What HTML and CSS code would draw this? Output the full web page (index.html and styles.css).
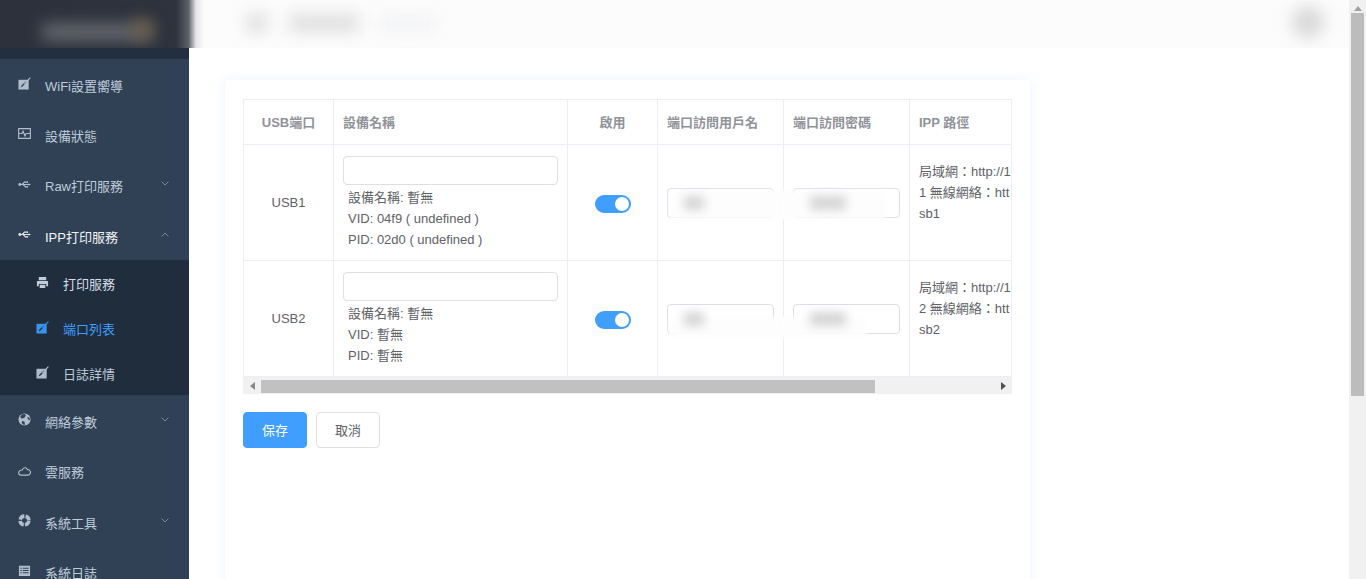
FILE: index.html
```html
<!DOCTYPE html>
<html lang="zh-Hant">
<head>
<meta charset="utf-8">
<title>端口列表</title>
<link rel="stylesheet" href="styles.css">
</head>
<body>
<div class="app">
  <aside class="sidebar">
    <div class="logo"><div class="logo-blur"></div><div class="logo-glow"></div></div>
    <div class="strip"></div>
    <nav class="menu">
      <a class="item"><svg class="ico" viewBox="0 0 14 14"><rect x=".5" y="3" width="11" height="10.500"/><path class="cut" d="M3.500 10.500 9 5"/><path class="line" d="M7 7.500 13.300.8"/></svg><span>WiFi設置嚮導</span></a>
      <a class="item"><svg class="ico" viewBox="0 0 14 14"><path class="line" d="M.7 1.700h12.600v10.600H.7zM.7 7h3.500l1.200-2.500L7.500 9.500l1.300-2.500h4.500"/></svg><span>設備狀態</span></a>
      <a class="item"><svg class="ico" viewBox="0 0 14 14"><path class="line" d="M2 7h10M4.500 7l2.500-2.500h2M5.500 7l2.500 2.500h1.500"/><circle cx="2" cy="7" r="1.600"/><path d="M13.800 7 11.500 5.600v2.800z"/><rect x="9" y="3.600" width="1.800" height="1.800"/><circle cx="10" cy="9.500" r="1"/></svg><span>Raw打印服務</span><svg class="chev" viewBox="0 0 8 5"><path d="M.5.500 4 4 7.500.500"/></svg></a>
      <a class="item open"><svg class="ico" viewBox="0 0 14 14"><path class="line" d="M2 7h10M4.500 7l2.500-2.500h2M5.500 7l2.500 2.500h1.500"/><circle cx="2" cy="7" r="1.600"/><path d="M13.800 7 11.500 5.600v2.800z"/><rect x="9" y="3.600" width="1.800" height="1.800"/><circle cx="10" cy="9.500" r="1"/></svg><span>IPP打印服務</span><svg class="chev" viewBox="0 0 8 5"><path d="M.5 4.500 4 1l3.500 3.500"/></svg></a>
      <div class="submenu">
        <a class="subitem white"><svg class="ico" viewBox="0 0 14 14"><path d="M3 1h8v3.500H3zM1 5.500h12V11h-2V8.500H3V11H1zM4 9.500h6V13H4z"/></svg><span>打印服務</span></a>
        <a class="subitem active"><svg class="ico" viewBox="0 0 14 14"><rect x=".5" y="3" width="11" height="10.500"/><path class="cut" d="M3.500 10.500 9 5"/><path class="line" d="M7 7.500 13.300.8"/></svg><span>端口列表</span></a>
        <a class="subitem"><svg class="ico" viewBox="0 0 14 14"><rect x=".5" y="3" width="11" height="10.500"/><path class="cut" d="M3.500 10.500 9 5"/><path class="line" d="M7 7.500 13.300.8"/></svg><span>日誌詳情</span></a>
      </div>
      <a class="item"><svg class="ico" viewBox="0 0 14 14"><circle cx="7" cy="7" r="6.500"/><path class="patch" d="M4 1.500 7.500 1l1 2-2 2.500L3.500 6 2.500 4zM4.500 8.500l2.500 1 .5 3.500-2-.5-1.500-2zM10 4l2.500 1.500.5 2.500-2.500-1.500z"/></svg><span>網絡參數</span><svg class="chev" viewBox="0 0 8 5"><path d="M.5.500 4 4 7.500.500"/></svg></a>
      <a class="item"><svg class="ico" viewBox="0 0 14 14"><path class="line" d="M3.500 12h7a3 3 0 0 0 2.500-4.500 3 3 0 0 0-2.800-1.500C9.500 3.500 5.500 3 4.500 6.500 2 6.500.7 8 .7 9.500S2 12 3.500 12z"/></svg><span>雲服務</span></a>
      <a class="item"><svg class="ico" viewBox="0 0 14 14"><circle class="buoy" cx="7" cy="7" r="4.700"/></svg><span>系統工具</span><svg class="chev" viewBox="0 0 8 5"><path d="M.5.500 4 4 7.500.500"/></svg></a>
      <a class="item"><svg class="ico" viewBox="0 0 14 14"><path d="M1 2h12v11H1zM2.500 4v1h1.500V4zM5 4v1h6.500V4zM2.500 6.500v1h1.500v-1zM5 6.500v1h6.500v-1zM2.500 9v1h1.500V9zM5 9v1h6.500V9z" fill-rule="evenodd"/></svg><span>系統日誌</span></a>
    </nav>
  </aside>

  <main class="main">
    <header class="topbar">
      <div class="blob crumb-a"></div>
      <div class="blob crumb-b"></div>
      <div class="blob crumb-c"></div>
      <div class="blob avatar"></div>
    </header>
    <div class="content">
      <section class="card">
        <div class="table-wrap">
          <table class="ports">
            <colgroup>
              <col class="c-usb"><col class="c-name"><col class="c-on"><col class="c-cred"><col class="c-cred"><col class="c-path">
            </colgroup>
            <thead>
              <tr>
                <th class="center">USB端口</th>
                <th>設備名稱</th>
                <th class="center">啟用</th>
                <th>端口訪問用戶名</th>
                <th>端口訪問密碼</th>
                <th>IPP 路徑</th>
              </tr>
            </thead>
            <tbody>
              <tr>
                <td class="center">USB1</td>
                <td>
                  <div class="text-input"></div>
                  <div class="info">設備名稱: 暫無</div>
                  <div class="info">VID: 04f9 ( undefined )</div>
                  <div class="info">PID: 02d0 ( undefined )</div>
                </td>
                <td class="center"><span class="switch"><i></i></span></td>
                <td><div class="cred"><div class="veil"></div><div class="smear short"></div></div></td>
                <td><div class="cred"><div class="veil tail-a"></div><div class="smear long"></div></div></td>
                <td class="path">
                  <div>局域網：http://1</div>
                  <div>1 無線網絡：htt</div>
                  <div>sb1</div>
                </td>
              </tr>
              <tr>
                <td class="center">USB2</td>
                <td>
                  <div class="text-input"></div>
                  <div class="info">設備名稱: 暫無</div>
                  <div class="info">VID: 暫無</div>
                  <div class="info">PID: 暫無</div>
                </td>
                <td class="center"><span class="switch"><i></i></span></td>
                <td><div class="cred"><div class="veil low"></div><div class="smear short"></div></div></td>
                <td><div class="cred"><div class="veil low tail-b"></div><div class="smear long"></div></div></td>
                <td class="path">
                  <div>局域網：http://1</div>
                  <div>2 無線網絡：htt</div>
                  <div>sb2</div>
                </td>
              </tr>
            </tbody>
          </table>
        </div>
        <div class="hscroll">
          <span class="arrow-left"></span>
          <div class="hthumb"></div>
          <span class="arrow-right"></span>
        </div>
        <div class="actions">
          <button class="btn primary">保存</button>
          <button class="btn">取消</button>
        </div>
      </section>
    </div>
  </main>

  <div class="vscroll">
    <span class="arrow-up"></span>
    <div class="vthumb"></div>
  </div>
</div>
</body>
</html>
```
FILE: styles.css
```css
* { box-sizing: border-box; }
html, body { margin: 0; height: 100%; overflow: hidden; background: #fff; }
body {
  font-family: "Liberation Sans", "Noto Sans CJK TC", sans-serif;
  font-size: 13px;
  color: #606266;
}
.app { display: flex; height: 579px; overflow: hidden; }

/* sidebar */
.sidebar { width: 189px; flex: none; background: #304156; display: flex; flex-direction: column; overflow: hidden; }
.logo {
  height: 48px; flex: none; position: relative; overflow: hidden;
  background: linear-gradient(90deg, #2c313c 0, #2f333e 176px, #5d616b 189px);
}
.logo-blur { position: absolute; left: 42px; top: 24px; width: 108px; height: 16px; background: #6a6c72; filter: blur(8px); }
.logo-glow { position: absolute; left: 134px; top: 20px; width: 18px; height: 18px; background: #6f5f48; filter: blur(8px); }
.strip { height: 11px; flex: none; background: #232e3e; }
.menu { display: flex; flex-direction: column; }
.item, .subitem { display: flex; align-items: center; color: #bfcbd9; }
.item { height: 50.33px; padding: 2px 20px 0 18px; flex: none; }
.item span { margin-left: 14px; }
.item.open { color: #f4f4f5; }
.ico { width: 13px; height: 13px; flex: none; fill: currentColor; margin-top: -3px; opacity: .9; }
.ico .line { fill: none; stroke: currentColor; stroke-width: 1.200; }
.ico .cut { fill: none; stroke: #304156; stroke-width: 1.400; }
.submenu .ico .cut { stroke: #1f2d3d; }
.ico .patch { fill: #304156; }
.ico .buoy { fill: none; stroke: currentColor; stroke-width: 3.800; stroke-dasharray: 6 1.380; stroke-dashoffset: -.690; }
.chev { width: 8px; height: 5px; margin-left: auto; margin-top: -4px; fill: none; stroke: #8a99ab; stroke-width: .8; }
.submenu { background: #1f2d3d; display: flex; flex-direction: column; }
.subitem { height: 45px; padding: 2px 0 0 36px; }
.subitem span { margin-left: 14px; }
.subitem.white { color: #d5dde6; }
.subitem.active { color: #409eff; }

/* main */
.main { flex: 1; min-width: 0; display: flex; flex-direction: column; }
.topbar {
  height: 48px; flex: none; position: relative; overflow: hidden;
  background: linear-gradient(90deg, #686b74 0, #e4e4e6 7px, #fcfcfc 15px);
}
.blob { position: absolute; filter: blur(8px); }
.crumb-a { left: 58px; top: 14px; width: 20px; height: 18px; background: #dcdcdc; }
.crumb-b { left: 100px; top: 14px; width: 70px; height: 18px; background: #dfdfdf; }
.crumb-c { left: 192px; top: 16px; width: 54px; height: 14px; background: #f0f1f4; }
.avatar { left: 1103px; top: 6px; width: 32px; height: 32px; border-radius: 50%; background: #d8d8d8; }
.content { flex: 1; padding: 32px 0 0 36px; }
.card {
  width: 805px; height: 900px; padding: 19px 19px 0 18px; background: #fff;
  box-shadow: 0 0 12px rgba(200, 220, 245, .35);
}

/* table */
.table-wrap { width: 769px; overflow: hidden; border-right: 1px solid #ebeef5; }
.ports { width: 916px; table-layout: fixed; border-collapse: collapse; }
.c-usb { width: 90px; }
.c-name { width: 234px; }
.c-on { width: 90px; }
.c-cred { width: 126px; }
.c-path { width: 250px; }
.ports th, .ports td { border: 1px solid #ebeef5; padding: 0 9px; text-align: left; vertical-align: middle; }
.ports th { height: 45px; padding-bottom: 1px; color: #909399; font-weight: 700; }
.ports td { height: 116px; }
.ports .center { text-align: center; }
.text-input { width: 215px; height: 29px; margin-bottom: 2px; border: 1px solid #dcdfe6; border-radius: 4px; background: #fff; }
.info { padding-left: 5px; line-height: 21px; }
.switch { display: inline-block; position: relative; width: 36px; height: 18px; margin-top: 3px; vertical-align: middle; border-radius: 9px; background: #409eff; }
.switch i { position: absolute; right: 2px; top: 2px; width: 14px; height: 14px; border-radius: 50%; background: #fff; }
.cred { position: relative; width: 107px; height: 30px; margin-top: 1px; border: 1px solid #dcdfe6; border-radius: 4px; }
.veil { position: absolute; left: 2px; top: 2px; width: 118px; height: 28px; background: #fdfdfd; filter: blur(2px); }
.veil.tail-a { left: -12px; width: 104px; }
.veil.low { top: 12px; height: 20px; }
.veil.tail-b { left: -12px; width: 84px; }
.smear { position: absolute; top: 7px; height: 14px; background: #d6d6d6; filter: blur(5px); }
.smear.short { left: 16px; width: 20px; }
.smear.long { left: 16px; width: 36px; }
.path { white-space: nowrap; line-height: 21px; }
.ports td.path { padding-bottom: 21px; }

/* scrollbars */
.hscroll { position: relative; width: 769px; height: 17px; background: #f1f1f1; display: flex; align-items: center; padding: 0 6px 0 7px; justify-content: space-between; }
.hthumb { position: absolute; left: 18px; top: 3px; width: 614px; height: 13px; background: #c1c1c1; }
.arrow-left { border: 4px solid transparent; border-left: 0; border-right: 5px solid #8a8a8a; }
.arrow-right { border: 4px solid transparent; border-right: 0; border-left: 5px solid #505050; }
.vscroll { width: 17px; flex: none; background: #f1f1f1; padding: 0 2px; display: flex; flex-direction: column; align-items: center; }
.arrow-up { flex: none; margin-top: 6px; border: 4px solid transparent; border-top: 0; border-bottom: 5px solid #a3a3a3; }
.vthumb { width: 13px; height: 383px; margin-top: 2px; background: #bcbcbc; }

/* buttons */
.actions { display: flex; gap: 9px; margin-top: 18px; }
.btn {
  width: 64px; height: 36px; padding: 0 0 2px; font: inherit; color: #606266; background: #fff;
  border: 1px solid #dcdfe6; border-radius: 4px;
}
.btn.primary { color: #fff; background: #409eff; border-color: #409eff; }
```
